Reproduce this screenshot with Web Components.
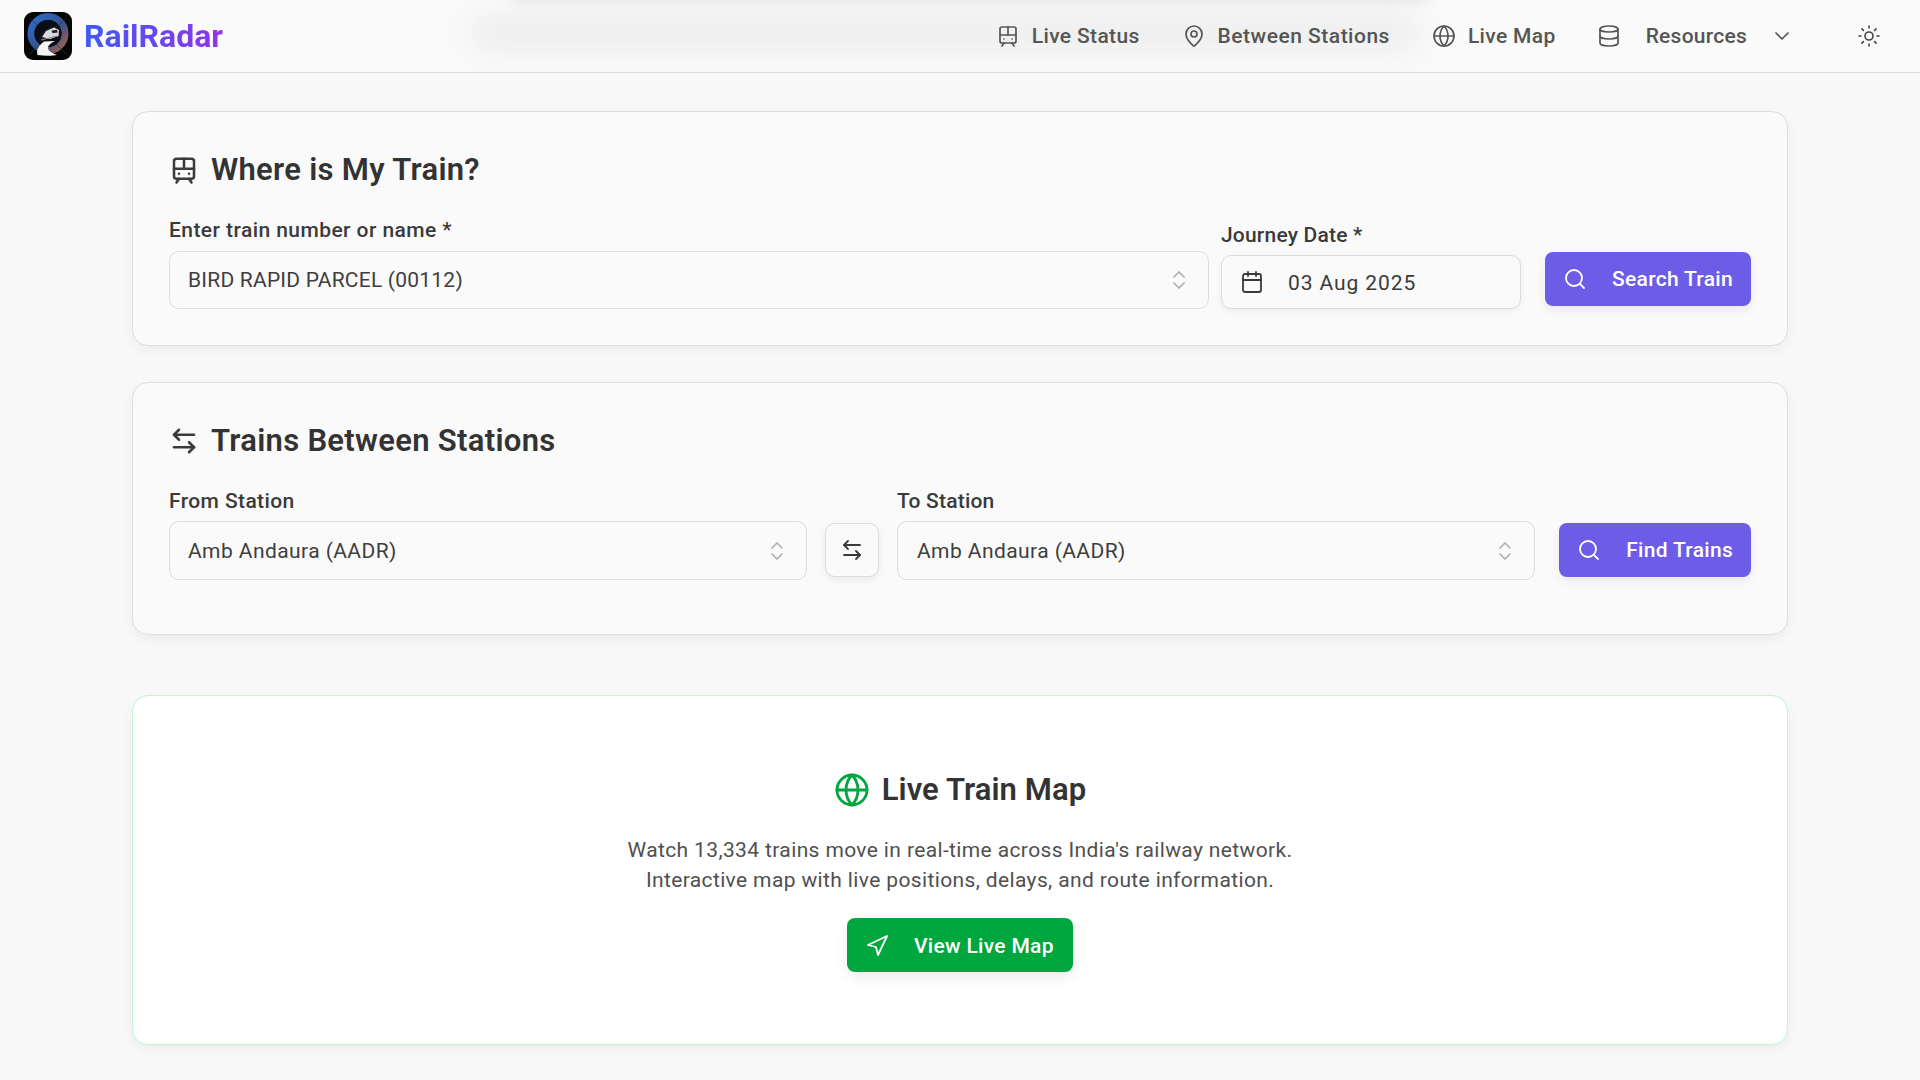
<!DOCTYPE html>
<html lang="en">
<head>
<meta charset="utf-8">
<title>RailRadar</title>
<style>
html,body{margin:0;padding:0;height:1080px;overflow:hidden;background:#f8f8f8;}
body{font-family:Roboto,"Liberation Sans",sans-serif;color:#333;}
rr-main{padding:38px 132px 0;}
</style>
</head>
<body>
<rr-header>
  <rr-nav-item icon="tram" slot="nav">Live Status</rr-nav-item>
  <rr-nav-item icon="pin" slot="nav" style="margin-left:42px;letter-spacing:.5px">Between Stations</rr-nav-item>
  <rr-nav-item icon="globe" slot="nav" style="margin-left:42px">Live Map</rr-nav-item>
  <rr-nav-item icon="database" slot="nav" chevron style="letter-spacing:.25px">Resources</rr-nav-item>
</rr-header>
<rr-main>
  <rr-card icon="tram" heading="Where is My Train?" style="--pb:36px;--gap:36px">
    <rr-field label="Enter train number or name *" style="flex:1;--ls:.43px"><rr-select style="--ls:.22px">BIRD RAPID PARCEL (00112)</rr-select></rr-field>
    <rr-field label="Journey Date *" style="width:300px;margin-left:12px;--ls:.2px;--mb:5px"><rr-date>03 Aug 2025</rr-date></rr-field>
    <rr-button icon="search" style="width:206px;margin-left:24px">Search Train</rr-button>
  </rr-card>
  <rr-card icon="swap" heading="Trains Between Stations" style="--pb:54px;--gap:60px">
    <rr-field label="From Station" style="flex:1;--ls:.4px;--mb:5px"><rr-select style="--h:59px;--ls:.42px">Amb Andaura (AADR)</rr-select></rr-field>
    <rr-swap></rr-swap>
    <rr-field label="To Station" style="flex:1;--ls:.2px;--mb:5px"><rr-select style="--h:59px;--ls:.42px;--pl:19px">Amb Andaura (AADR)</rr-select></rr-field>
    <rr-button icon="search" style="width:192px;margin-left:24px">Find Trains</rr-button>
  </rr-card>
  <rr-map-card>
    <span slot="heading">Live Train Map</span>
    <span slot="line1">Watch 13,334 trains move in real-time across India's railway network.</span>
    <span slot="line2">Interactive map with live positions, delays, and route information.</span>
    <span slot="action">View Live Map</span>
  </rr-map-card>
</rr-main>
<script>
const PATHS={
  tram:'<rect width="16" height="16" x="4" y="3" rx="2"/><path d="M4 11h16"/><path d="M12 3v8"/><path d="m8 19-2 3"/><path d="m18 22-2-3"/><path d="M8 15h.01"/><path d="M16 15h.01"/>',
  pin:'<path d="M20 10c0 4.993-5.539 10.193-7.399 11.799a1 1 0 0 1-1.202 0C9.539 20.193 4 14.993 4 10a8 8 0 0 1 16 0"/><circle cx="12" cy="10" r="3"/>',
  globe:'<circle cx="12" cy="12" r="10"/><path d="M12 2a14.5 14.5 0 0 0 0 20 14.5 14.5 0 0 0 0-20"/><path d="M2 12h20"/>',
  database:'<ellipse cx="12" cy="5" rx="9" ry="3"/><path d="M3 5V19A9 3 0 0 0 21 19V5"/><path d="M3 12A9 3 0 0 0 21 12"/>',
  chevron:'<path d="m6 9 6 6 6-6"/>',
  chevrons:'<path d="m7 15 5 5 5-5"/><path d="m7 9 5-5 5 5"/>',
  sun:'<circle cx="12" cy="12" r="4"/><path d="M12 2v2"/><path d="M12 20v2"/><path d="m4.93 4.93 1.41 1.41"/><path d="m17.66 17.66 1.41 1.41"/><path d="M2 12h2"/><path d="M20 12h2"/><path d="m6.34 17.66-1.41 1.41"/><path d="m19.07 4.93-1.41 1.41"/>',
  swap:'<path d="M8 3 4 7l4 4"/><path d="M4 7h16"/><path d="m16 21 4-4-4-4"/><path d="M20 17H4"/>',
  calendar:'<path d="M8 2v4"/><path d="M16 2v4"/><rect width="18" height="18" x="3" y="4" rx="2"/><path d="M3 10h18"/>',
  search:'<path d="m21 21-4.3-4.3"/><circle cx="11" cy="11" r="8"/>',
  nav:'<polygon points="3 11 22 2 13 21 11 13 3 11"/>'
};
class Base extends HTMLElement{
  render(html){ if(!this.shadowRoot) this.attachShadow({mode:'open'}); this.shadowRoot.innerHTML=html; }
  connectedCallback(){ this.render(this.html()); }
}
class RRIcon extends Base{
  html(){
    const s=this.getAttribute('size')||24, w=this.getAttribute('stroke')||2;
    return `<style>:host{display:inline-flex;flex:none;width:${s}px;height:${s}px;color:inherit}svg{display:block}</style>
    <svg width="${s}" height="${s}" viewBox="0 0 24 24" fill="none" stroke="currentColor" stroke-width="${w}" stroke-linecap="round" stroke-linejoin="round">${PATHS[this.getAttribute('name')]||''}</svg>`;
  }
}
class RRLogo extends Base{
  html(){return `<style>:host{display:block;flex:none;width:48px;height:48px}svg{display:block}</style>
  <svg width="48" height="48" viewBox="0 0 48 48" role="img" aria-label="RailRadar logo">
    <defs>
      <linearGradient id="r" x1="0" y1="0" x2="1" y2="1"><stop offset="0" stop-color="#2f6ac9"/><stop offset=".55" stop-color="#34528f"/><stop offset="1" stop-color="#a5624d"/></linearGradient>
    </defs>
    <rect width="48" height="48" rx="9" fill="#050505"/>
    <circle cx="24" cy="21.5" r="17" fill="none" stroke="url(#r)" stroke-width="7"/>
    <path d="M5 5 43 43M43 5 5 43" stroke="#2a2f3a" stroke-width=".7"/>
    <circle cx="24" cy="21.5" r="13.5" fill="#0b0d14"/>
    <path d="M13 30 17 21 28 13 36 15 36 24 22 29Z" fill="#11141c"/>
    <path d="M18 25 22 19 30 15.5 35 18 34.5 24 26 27Z" fill="#d9dbe0"/>
    <path d="M27.5 18.5 33 17.8 33.8 20.5 28.5 21.3Z" fill="#20242e"/>
    <path d="M17 28 33 24" stroke="#8c8f98" stroke-width="1.2"/>
    <path d="M20 29.5C15 33 12 38 13.5 43 20 44 28 44 33 43 28 41 24 39 24 36 24 33 27 31 31 29Z" fill="#f4f4f4"/>
  </svg>`;}
}
class RRHeader extends Base{
  html(){return `<style>
    :host{display:flex;position:relative;height:72px;align-items:center;padding:0 39px 0 24px;box-sizing:content-box;border-bottom:1px solid #dedede;background:#fafafa;overflow:hidden}
    .blur{position:absolute;border-radius:12px;background:#dcdcdc;filter:blur(16px);pointer-events:none}
    .b1{left:470px;top:18px;width:950px;height:30px;opacity:.5}
    .b2{left:510px;top:-10px;width:920px;height:12px;background:#9a9a9a;filter:blur(6px);opacity:.22}
    .brand{display:flex;align-items:center;gap:12px;position:relative}
    .name{font:700 32px/36px Roboto,sans-serif;background:linear-gradient(90deg,#3b5cf6,#9333ea);-webkit-background-clip:text;background-clip:text;color:transparent}
    nav{display:flex;align-items:center;margin-left:auto;position:relative}
    .sun{margin-left:63px;color:#444;display:flex}
    </style>
    <span class="blur b1"></span><span class="blur b2"></span>
    <div class="brand"><rr-logo></rr-logo><span class="name">RailRadar</span></div>
    <nav><slot name="nav"></slot><span class="sun"><rr-icon name="sun" size="24" stroke="1.6"></rr-icon></span></nav>`;}
}
class RRNavItem extends Base{
  html(){
    const ch=this.hasAttribute('chevron');
    return `<style>
    :host{display:flex;align-items:center;gap:12px;margin-left:41px;font:500 21px/30px Roboto,sans-serif;color:#555;letter-spacing:.35px}
    :host([chevron]){gap:25px}
    .c{margin-left:-2px}
    </style><rr-icon name="${this.getAttribute('icon')}" size="24" stroke="1.7"></rr-icon><slot></slot>${ch?'<rr-icon class="c" name="chevron" size="24" stroke="1.7"></rr-icon>':''}`;
  }
}
class RRCard extends Base{
  html(){return `<style>
    :host{display:block;box-sizing:border-box;background:#fafafa;border:1px solid #dedede;border-radius:16px;padding:40px 36px var(--pb,36px);margin-bottom:var(--gap,37px);box-shadow:0 4px 12px rgba(0,0,0,.05)}
    h2{display:flex;align-items:center;gap:12px;margin:0 0 27px;font:600 31px/36px Roboto,sans-serif;letter-spacing:.3px;color:#333}
    .row{display:flex;align-items:flex-end}
    rr-icon{color:#3a3a3a}
    </style>
    <h2><rr-icon name="${this.getAttribute('icon')}" size="30" stroke="2"></rr-icon><span>${this.getAttribute('heading')}</span></h2>
    <div class="row"><slot></slot></div>`;}
}
class RRField extends Base{
  html(){return `<style>
    :host{display:block;min-width:0}
    label{display:block;font:500 21px/30px Roboto,sans-serif;letter-spacing:var(--ls,.3px);color:#3a3a3a;margin-bottom:var(--mb,6px)}
    </style><label>${this.getAttribute('label')}</label><slot></slot>`;}
}
class RRSelect extends Base{
  html(){return `<style>
    :host{display:flex;align-items:center;justify-content:space-between;box-sizing:border-box;height:var(--h,58px);padding:0 18px 0 var(--pl,18px);border:1px solid #dcdcdc;border-radius:10px;background:#fafafa;font:400 21px/30px Roboto,sans-serif;letter-spacing:var(--ls,.22px);color:#3e3e3e}
    rr-icon{color:#b0b0b0;margin-right:-1px}
    </style><slot></slot><rr-icon name="chevrons" size="24" stroke="1.7"></rr-icon>`;}
}
class RRDate extends Base{
  html(){return `<style>
    :host{display:flex;align-items:center;gap:24px;box-sizing:border-box;height:54px;padding:0 18px;border:1px solid #dcdcdc;border-radius:10px;background:#fafafa;font:400 21px/30px Roboto,sans-serif;letter-spacing:.9px;color:#3a3a3a;box-shadow:0 2px 6px rgba(0,0,0,.06)}
    slot{display:block;padding-top:2px}
    </style><rr-icon name="calendar" size="24" stroke="1.8"></rr-icon><slot></slot>`;}
}
class RRButton extends Base{
  html(){return `<style>
    :host{display:flex;align-items:center;justify-content:space-between;box-sizing:border-box;height:54px;margin-bottom:3px;padding:0 18px;border-radius:8px;background:#6d5ce7;color:#fff;font:500 21px/30px Roboto,sans-serif;letter-spacing:.3px;box-shadow:0 4px 10px rgba(0,0,0,.07)}
    </style><rr-icon name="${this.getAttribute('icon')}" size="24" stroke="1.8"></rr-icon><slot></slot>`;}
}
class RRSwap extends Base{
  html(){return `<style>
    :host{display:flex;flex:none;align-items:center;justify-content:center;box-sizing:border-box;width:54px;height:54px;margin:0 18px 3px;border:1px solid #dcdcdc;border-radius:10px;background:#fafafa;color:#3a3a3a;box-shadow:0 3px 8px rgba(0,0,0,.07)}
    </style><rr-icon name="swap" size="24" stroke="1.8"></rr-icon>`;}
}
class RRMapCard extends Base{
  html(){return `<style>
    :host{display:flex;flex-direction:column;align-items:center;box-sizing:border-box;height:350px;padding-top:74px;background:#fff;border:1px solid #c4f3d5;border-radius:16px;box-shadow:0 4px 12px rgba(0,0,0,.05)}
    h2{display:flex;align-items:center;gap:12px;margin:0 0 25px;font:600 31px/40px Roboto,sans-serif;letter-spacing:.1px;color:#333}
    h2 rr-icon{color:#00a63e}
    p{margin:0 0 23px;text-align:center;font:400 21px/30px Roboto,sans-serif;letter-spacing:.37px;color:#4f4f4f}
    p span{display:block}
    .btn{display:flex;align-items:center;gap:25px;box-sizing:border-box;width:226px;height:54px;padding:1px 18px 0;border-radius:8px;background:#00a63e;color:#fff;font:500 21px/30px Roboto,sans-serif;letter-spacing:.3px;box-shadow:0 6px 14px rgba(0,0,0,.07)}
    </style>
    <h2><rr-icon name="globe" size="36" stroke="1.9"></rr-icon><slot name="heading"></slot></h2>
    <p><span><slot name="line1"></slot></span><span><slot name="line2"></slot></span></p>
    <div class="btn"><rr-icon name="nav" size="24" stroke="1.8"></rr-icon><slot name="action"></slot></div>`;}
}
class RRMain extends HTMLElement{
  connectedCallback(){ if(!this.shadowRoot){this.attachShadow({mode:'open'}).innerHTML='<style>:host{display:block;box-sizing:border-box}</style><slot></slot>';} }
}
customElements.define('rr-icon',RRIcon);
customElements.define('rr-logo',RRLogo);
customElements.define('rr-header',RRHeader);
customElements.define('rr-nav-item',RRNavItem);
customElements.define('rr-card',RRCard);
customElements.define('rr-field',RRField);
customElements.define('rr-select',RRSelect);
customElements.define('rr-date',RRDate);
customElements.define('rr-button',RRButton);
customElements.define('rr-swap',RRSwap);
customElements.define('rr-map-card',RRMapCard);
customElements.define('rr-main',RRMain);
</script>
</body>
</html>
